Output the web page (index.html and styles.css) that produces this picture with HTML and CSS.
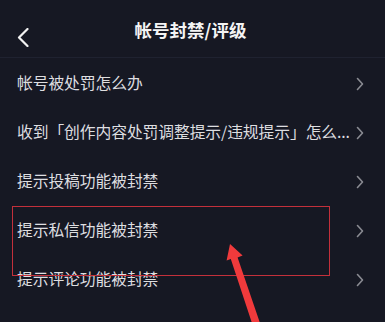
FILE: index.html
```html
<!DOCTYPE html>
<html lang="zh-CN">
<head>
<meta charset="utf-8">
<title>帐号封禁/评级</title>
<link rel="stylesheet" href="styles.css">
</head>
<body>
<div class="page">
  <header class="topbar">
    <svg class="back" width="12" height="19" viewBox="0 0 12 19"><polyline points="10.5,1 2,9.5 10.5,18" fill="none" stroke="#f2f2f2" stroke-width="2.2" stroke-linecap="round" stroke-linejoin="round"/></svg>
    <h1 class="title">帐号封禁/评级</h1>
  </header>
  <ul class="list">
    <li class="row"><span class="label">帐号被处罚怎么办</span><svg class="chev" width="8" height="14" viewBox="0 0 8 14"><polyline points="1.5,1.5 6.5,7 1.5,12.5" fill="none" stroke="#8a8b92" stroke-width="1.6" stroke-linecap="round" stroke-linejoin="round"/></svg></li>
    <li class="row"><span class="label">收到「创作内容处罚调整提示/违规提示」怎么...</span><svg class="chev" width="8" height="14" viewBox="0 0 8 14"><polyline points="1.5,1.5 6.5,7 1.5,12.5" fill="none" stroke="#8a8b92" stroke-width="1.6" stroke-linecap="round" stroke-linejoin="round"/></svg></li>
    <li class="row"><span class="label">提示投稿功能被封禁</span><svg class="chev" width="8" height="14" viewBox="0 0 8 14"><polyline points="1.5,1.5 6.5,7 1.5,12.5" fill="none" stroke="#8a8b92" stroke-width="1.6" stroke-linecap="round" stroke-linejoin="round"/></svg></li>
    <li class="row"><span class="label">提示私信功能被封禁</span><svg class="chev" width="8" height="14" viewBox="0 0 8 14"><polyline points="1.5,1.5 6.5,7 1.5,12.5" fill="none" stroke="#8a8b92" stroke-width="1.6" stroke-linecap="round" stroke-linejoin="round"/></svg></li>
    <li class="row"><span class="label">提示评论功能被封禁</span><svg class="chev" width="8" height="14" viewBox="0 0 8 14"><polyline points="1.5,1.5 6.5,7 1.5,12.5" fill="none" stroke="#8a8b92" stroke-width="1.6" stroke-linecap="round" stroke-linejoin="round"/></svg></li>
  </ul>
  <div class="highlight"></div>
  <svg class="arrow" width="385" height="322" viewBox="0 0 385 322">
    <polygon points="230,244 242.6,255.6 237.6,257.4 261,326 253.6,328 230.8,259 226.6,260.4" fill="#f03a3c"/>
  </svg>
</div>
</body>
</html>
```

FILE: styles.css
```css
html, body {
  margin: 0;
  padding: 0;
  background: #161823;
}
.page {
  position: relative;
  width: 385px;
  height: 322px;
  overflow: hidden;
  background: #161823;
  font-family: "Noto Sans CJK SC", "Noto Sans", sans-serif;
}
.topbar {
  position: relative;
  height: 57px;
  border-bottom: 1px solid #1f2230;
  display: flex;
  align-items: center;
  justify-content: center;
}
.back {
  position: absolute;
  left: 17px;
  top: 28px;
}
.title {
  margin: 0;
  font-size: 17.5px;
  font-weight: 700;
  color: #f4f4f4;
  line-height: 1;
  padding-top: 3px;
  padding-right: 4px;
}
.list {
  list-style: none;
  margin: 0;
  padding: 0;
}
.row {
  height: 49px;
  display: flex;
  align-items: center;
  justify-content: space-between;
  padding: 0 21px 0 17px;
}
.label {
  font-size: 15.8px;
  color: #dedee0;
  white-space: nowrap;
  letter-spacing: -0.1px;
}
.chev {
  flex: none;
  margin-top: 2px;
}
.highlight {
  position: absolute;
  left: 12px;
  top: 206px;
  width: 316px;
  height: 68px;
  border: 1.5px solid #c3303b;
}
.arrow {
  position: absolute;
  left: 0;
  top: 0;
}
```
